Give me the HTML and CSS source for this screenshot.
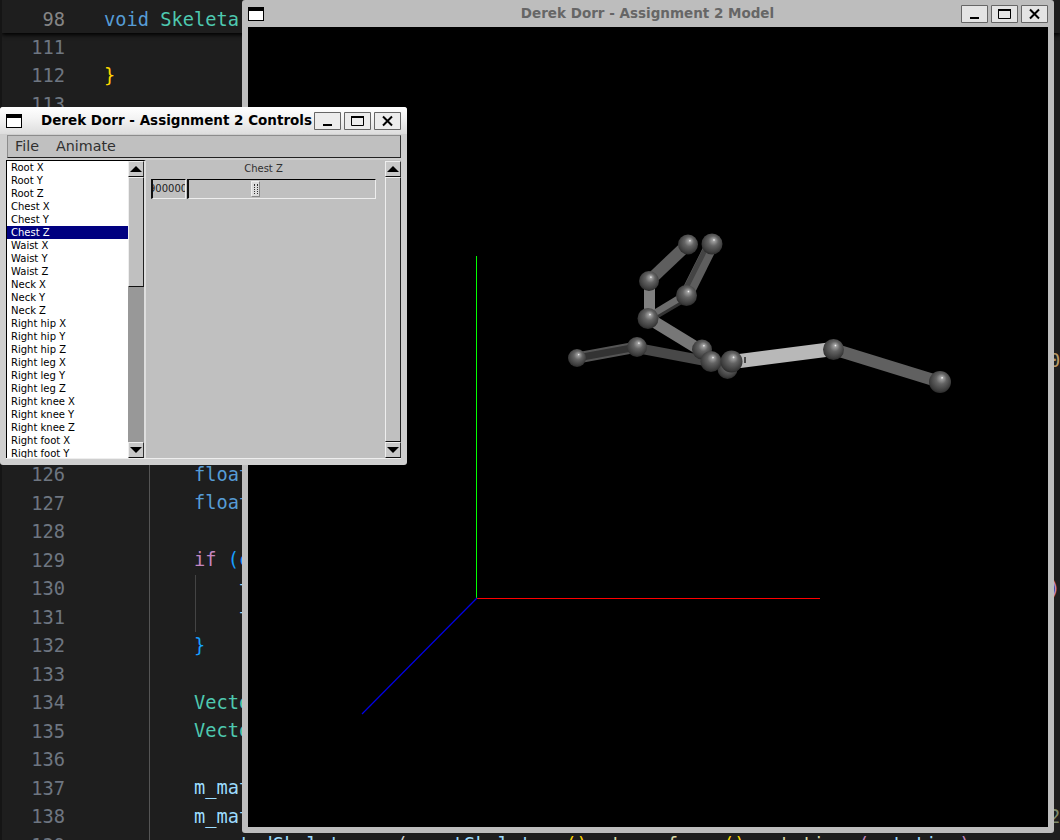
FILE: index.html
```html
<!DOCTYPE html>
<html>
  <head>
    <meta charset="UTF-8">
    <title>Derek Dorr - Assignment 2</title>
    <link rel="stylesheet" href="styles.css">
  </head>
  <body>
    <svg class="defs" width="0" height="0">
      <symbol id="icon-min" viewBox="0 0 27 18"><rect x="9" y="12" width="9" height="2" fill="#000"/></symbol>
      <symbol id="icon-max" viewBox="0 0 27 18"><path d="M7.500 4.500h12v9h-12z" fill="none" stroke="#000"/><rect x="7" y="4" width="13" height="2" fill="#000"/></symbol>
      <symbol id="icon-close" viewBox="0 0 27 18"><path d="M9 4.500l9 9M18 4.500l-9 9" fill="none" stroke="#000" stroke-width="2"/></symbol>
    </svg>

    <div class="editor">
      <div class="sticky">
        <span class="ln ln-sticky">98</span><span class="code"><span class="kw">void</span> <span class="type">Skeleta</span></span>
      </div>
      <div class="line"><span class="ln">111</span><span class="code"></span></div>
      <div class="line"><span class="ln">112</span><span class="code"><span class="gold">}</span></span></div>
      <div class="line"><span class="ln">113</span><span class="code"></span></div>
      <div class="line"><span class="ln">114</span><span class="code"></span></div>
      <div class="line"><span class="ln">115</span><span class="code"></span></div>
      <div class="line"><span class="ln">116</span><span class="code"></span></div>
      <div class="line"><span class="ln">117</span><span class="code"></span></div>
      <div class="line"><span class="ln">118</span><span class="code"></span></div>
      <div class="line"><span class="ln">119</span><span class="code"></span></div>
      <div class="line"><span class="ln">120</span><span class="code"></span></div>
      <div class="line"><span class="ln">121</span><span class="code"></span></div>
      <div class="line"><span class="ln">122</span><span class="code">                                                                                    <span class="tan">0</span></span></div>
      <div class="line"><span class="ln">123</span><span class="code"></span></div>
      <div class="line"><span class="ln">124</span><span class="code"></span></div>
      <div class="line"><span class="ln">125</span><span class="code"></span></div>
      <div class="line"><span class="ln">126</span><span class="code">        <span class="kw">float</span></span></div>
      <div class="line"><span class="ln">127</span><span class="code">        <span class="kw">float</span></span></div>
      <div class="line"><span class="ln">128</span><span class="code"></span></div>
      <div class="line"><span class="ln">129</span><span class="code">        <span class="ctl">if</span> <span class="brace">(c</span></span></div>
      <div class="line"><span class="ln">130</span><span class="code guide">            <span class="var">t</span>                                                                       <span class="ctl">)</span></span></div>
      <div class="line"><span class="ln">131</span><span class="code guide">            <span class="var">t</span></span></div>
      <div class="line"><span class="ln">132</span><span class="code">        <span class="brace">}</span></span></div>
      <div class="line"><span class="ln">133</span><span class="code"></span></div>
      <div class="line"><span class="ln">134</span><span class="code">        <span class="type">Vector</span></span></div>
      <div class="line"><span class="ln">135</span><span class="code">        <span class="type">Vector</span></span></div>
      <div class="line"><span class="ln">136</span><span class="code"></span></div>
      <div class="line"><span class="ln">137</span><span class="code">        <span class="var">m_mat</span></span></div>
      <div class="line"><span class="ln">138</span><span class="code">        <span class="var">m_mat</span>                                                                       <span class="num">2</span></span></div>
      <div class="line"><span class="ln">139</span><span class="code">            <span class="var">tedSkeleton</span> <span class="plain">= (</span><span class="var">constSkeleton</span> <span class="gold">()</span><span class="plain">-&gt;</span><span class="fn">transform</span> <span class="gold">()</span><span class="plain">.</span><span class="fn">rotation</span> <span class="ctl">(</span><span class="var">rotation</span><span class="ctl">)</span></span></div>
    </div>

    <div class="window window-model">
      <div class="titlebar">
        <span class="win-icon"></span>
        <span class="win-title">Derek Dorr - Assignment 2 Model</span>
        <span class="win-btn"><svg width="27" height="18"><use href="#icon-min"/></svg></span>
        <span class="win-btn"><svg width="27" height="18"><use href="#icon-max"/></svg></span>
        <span class="win-btn"><svg width="27" height="18"><use href="#icon-close"/></svg></span>
      </div>
      <svg class="scene" width="800" height="800" viewBox="248 27 800 800">
        <defs>
          <radialGradient id="ball" cx="0.5" cy="0.45" r="0.62" fx="0.6" fy="0.3">
            <stop offset="0" stop-color="#ffffff"/>
            <stop offset="0.1" stop-color="#a0a0a0"/>
            <stop offset="0.38" stop-color="#646464"/>
            <stop offset="0.78" stop-color="#3c3c3c"/>
            <stop offset="1" stop-color="#1e1e1e"/>
          </radialGradient>
        </defs>
        <g class="axes">
          <line x1="476.500" y1="598" x2="476.500" y2="256" stroke="#00ff00"/>
          <line x1="477" y1="598.500" x2="820" y2="598.500" stroke="#ff0000"/>
          <path d="M477 598L362 714" fill="none" stroke="#0000e6" stroke-width="1.200"/>
        </g>
        <g class="limbs">
          <line x1="688" y1="244" x2="649" y2="281" stroke="#5e5e5e" stroke-width="12"/>
          <line x1="712" y1="244" x2="686" y2="296" stroke="#5e5e5e" stroke-width="13"/>
          <line x1="708" y1="244" x2="682" y2="296" stroke="#444" stroke-width="5"/>
          <line x1="649.500" y1="281" x2="649.500" y2="318" stroke="#808080" stroke-width="11"/>
          <line x1="686" y1="295" x2="648" y2="318" stroke="#6c6c6c" stroke-width="8"/>
          <line x1="686" y1="300" x2="652" y2="320" stroke="#333" stroke-width="3"/>
          <line x1="648" y1="318" x2="702" y2="351" stroke="#777" stroke-width="12"/>
          <line x1="637" y1="347" x2="577" y2="358" stroke="#555" stroke-width="11"/>
          <line x1="637" y1="347" x2="577" y2="358" stroke="#333" stroke-width="7"/>
          <line x1="637" y1="348" x2="711" y2="362" stroke="#484848" stroke-width="10"/>
          <line x1="732" y1="362" x2="833" y2="349" stroke="#b8b8b8" stroke-width="14"/>
          <line x1="745" y1="357" x2="745" y2="363" stroke="#222" stroke-width="1.500"/>
          <line x1="833" y1="349" x2="940" y2="382" stroke="#606060" stroke-width="12"/>
        </g>
        <g class="joints" fill="url(#ball)">
          <circle cx="688" cy="244.500" r="10"/>
          <circle cx="712" cy="244" r="10.500"/>
          <circle cx="649" cy="281" r="10"/>
          <circle cx="686.500" cy="295.500" r="10.500"/>
          <circle cx="648" cy="318.500" r="10.500"/>
          <circle cx="702" cy="349.500" r="10"/>
          <circle cx="637" cy="347" r="10"/>
          <circle cx="577" cy="358" r="9"/>
          <circle cx="727.500" cy="369" r="10"/>
          <circle cx="711" cy="361.500" r="10.500"/>
          <circle cx="731.500" cy="361.500" r="11"/>
          <circle cx="833.500" cy="349.500" r="10.500"/>
          <circle cx="940" cy="382" r="11"/>
        </g>
      </svg>
    </div>

    <div class="window window-controls">
      <div class="titlebar">
        <span class="win-icon"></span>
        <span class="win-title">Derek Dorr - Assignment 2 Controls</span>
        <span class="win-btn"><svg width="27" height="18"><use href="#icon-min"/></svg></span>
        <span class="win-btn"><svg width="27" height="18"><use href="#icon-max"/></svg></span>
        <span class="win-btn"><svg width="27" height="18"><use href="#icon-close"/></svg></span>
      </div>
      <div class="menubar">
        <span class="menu-item">File</span>
        <span class="menu-item">Animate</span>
      </div>
      <div class="panes">
        <div class="list-pane">
          <ul class="joint-list">
            <li>Root X</li>
            <li>Root Y</li>
            <li>Root Z</li>
            <li>Chest X</li>
            <li>Chest Y</li>
            <li class="selected">Chest Z</li>
            <li>Waist X</li>
            <li>Waist Y</li>
            <li>Waist Z</li>
            <li>Neck X</li>
            <li>Neck Y</li>
            <li>Neck Z</li>
            <li>Right hip X</li>
            <li>Right hip Y</li>
            <li>Right hip Z</li>
            <li>Right leg X</li>
            <li>Right leg Y</li>
            <li>Right leg Z</li>
            <li>Right knee X</li>
            <li>Right knee Y</li>
            <li>Right knee Z</li>
            <li>Right foot X</li>
            <li>Right foot Y</li>
          </ul>
          <div class="scrollbar">
            <span class="sb-btn"><span class="arrow-up"></span></span>
            <div class="sb-track">
              <span class="sb-thumb sb-thumb-list"></span>
            </div>
            <span class="sb-btn"><span class="arrow-down"></span></span>
          </div>
        </div>
        <div class="slider-pane">
          <div class="slider-area">
            <div class="slider-label">Chest Z</div>
            <div class="slider-row">
              <div class="value-box"><span class="value-text">9000000000</span></div>
              <div class="slider"><span class="slider-thumb"><span class="slider-grip"></span></span></div>
            </div>
          </div>
          <div class="scrollbar scrollbar-full">
            <span class="sb-btn"><span class="arrow-up"></span></span>
            <div class="sb-track">
              <span class="sb-thumb"></span>
            </div>
            <span class="sb-btn"><span class="arrow-down"></span></span>
          </div>
        </div>
      </div>
    </div>
  </body>
</html>
```

FILE: styles.css
```css
* {
  box-sizing: border-box;
}
html, body {
  height: 100%;
}
body {
  margin: 0;
  overflow: hidden;
  background-color: #1e1e1e;
  font-family: "DejaVu Sans", sans-serif;
}
.defs {
  display: block;
}

/* editor behind the windows */
.editor {
  height: 840px;
  overflow: hidden;
  border-left: 2px solid #151515;
  font-family: "DejaVu Sans Mono", monospace;
  font-size: 18.7px;
  background-color: #1e1e1e;
}
.sticky {
  display: flex;
  align-items: center;
  height: 33px;
  padding-top: 6px;
  box-shadow: 0 2px 4px #000;
}
.line {
  display: flex;
  align-items: center;
  height: 28.5px;
}
.ln {
  width: 63px;
  flex: none;
  text-align: right;
  color: #6e7681;
}
.ln-sticky {
  color: #858585;
}
.code {
  margin-left: 39px;
  flex: 1;
  white-space: pre;
  color: #d4d4d4;
}
.line .code {
  height: 100%;
  margin-left: 0;
  padding-left: 39px;
  line-height: 28.5px;
  background: linear-gradient(#555, #555) 84px 0 / 1px 100% no-repeat;
}
.line .guide {
  background:
    linear-gradient(#555, #555) 84px 0 / 1px 100% no-repeat,
    linear-gradient(#444, #444) 130px 0 / 1px 100% no-repeat;
}
.line:nth-child(-n+4) .code {
  background: none;
}
.kw { color: #569cd6; }
.type { color: #4ec9b0; }
.ctl { color: #c586c0; }
.var { color: #9cdcfe; }
.fn { color: #dcdcaa; }
.num { color: #7d8a6c; }
.tan { color: #b89a68; }
.gold { color: #ffd700; }
.brace { color: #179fff; }
.plain { color: #d4d4d4; }

/* desktop windows */
.window {
  position: absolute;
  display: flex;
  flex-direction: column;
  border-radius: 3px;
}
.window-model {
  left: 242px;
  top: 0;
  width: 812px;
  height: 833px;
  padding: 0 6px;
  background-color: #bdbdbd;
}
.window-controls {
  left: 0;
  top: 107px;
  width: 407px;
  height: 358px;
  background-color: #cfcfcf;
}
.titlebar {
  display: flex;
  align-items: center;
  gap: 3px;
  flex: none;
  height: 27px;
}
.window-controls .titlebar {
  padding: 0 6px;
  border-radius: 3px 3px 0 0;
  background: linear-gradient(#ffffff, #f4f4f4 40%, #dddddd);
}
.win-icon {
  width: 16px;
  height: 14px;
  flex: none;
  background-color: #fff;
  border: 1px solid #000;
  border-top-width: 4px;
}
.win-title {
  flex: 1;
  min-width: 0;
  padding-bottom: 2px;
  font-size: 13.5px;
  font-weight: bold;
  white-space: nowrap;
}
.window-model .win-title {
  padding-left: 70px;
  text-align: center;
  color: #666;
}
.window-controls .win-title {
  padding-left: 16px;
  color: #000;
}
.win-btn {
  display: block;
  width: 27px;
  height: 18px;
  flex: none;
  background-color: #e4e4e4;
  box-shadow: inset 0 0 0 1px #666;
  border-radius: 1px;
}
.window-controls .win-btn {
  background-color: #ececec;
}
.win-btn svg {
  display: block;
}
.scene {
  display: block;
  flex: none;
  background-color: #000;
}
.axes line {
  shape-rendering: crispEdges;
}

/* controls window contents */
.menubar {
  display: flex;
  align-items: center;
  gap: 17px;
  flex: none;
  height: 23px;
  margin: 1px 6px 0 7px;
  padding: 0 0 2px 7px;
  background-color: #c0c0c0;
  border-top: 1px solid #8c8c8c;
  border-left: 1px solid #8c8c8c;
  border-right: 1px solid #333;
  border-bottom: 1px solid #222;
  font-size: 14.3px;
  color: #303030;
}
.panes {
  display: flex;
  height: 299px;
  margin: 2px 6px 0 6px;
  border-bottom: 1px solid #eee;
}
.list-pane {
  display: flex;
  width: 140px;
  flex: none;
  border-top: 1px solid #000;
  border-left: 1px solid #000;
  border-right: 2px solid #dedede;
  background-color: #fff;
}
.joint-list {
  width: 121px;
  flex: none;
  margin: 0;
  padding: 0;
  list-style: none;
  overflow: hidden;
  font-size: 10px;
  color: #000;
}
.joint-list li {
  height: 13px;
  line-height: 13px;
  padding-left: 4px;
  white-space: nowrap;
}
.joint-list .selected {
  background-color: #000080;
  color: #fff;
}
.scrollbar {
  display: flex;
  flex-direction: column;
  width: 16px;
  flex: none;
  background-color: #c0c0c0;
}
.sb-btn {
  display: flex;
  align-items: center;
  justify-content: center;
  height: 16px;
  flex: none;
  background-color: #c8c8c8;
  border-top: 1px solid #eee;
  border-left: 1px solid #eee;
  border-right: 1px solid #333;
  border-bottom: 1px solid #111;
}
.sb-track {
  display: flex;
  flex-direction: column;
  flex: 1;
  background-color: #989898;
}
.sb-thumb {
  display: block;
  flex: 1;
  background-color: #c0c0c0;
  border-top: 1px solid #eee;
  border-left: 1px solid #eee;
  border-right: 1px solid #222;
  border-bottom: 1px solid #111;
}
.sb-thumb-list {
  flex: none;
  height: 110px;
}
.arrow-up, .arrow-down {
  width: 0;
  height: 0;
  border-left: 6px solid transparent;
  border-right: 6px solid transparent;
}
.arrow-up {
  border-bottom: 6px solid #000;
}
.arrow-down {
  border-top: 6px solid #000;
}
.slider-pane {
  display: flex;
  flex: 1;
  background-color: #c0c0c0;
  padding-top: 1px;
}
.slider-area {
  flex: 1;
  padding: 0 9px 0 5px;
}
.slider-label {
  height: 18px;
  line-height: 16px;
  text-align: center;
  font-size: 10px;
  color: #303030;
}
.slider-row {
  display: flex;
  height: 20px;
  gap: 1px;
}
.value-box {
  width: 35px;
  flex: none;
  overflow: hidden;
  border-top: 1px solid #000;
  border-left: 2px solid #111;
  border-bottom: 1px solid #eee;
  border-right: 1px solid #eee;
  font-size: 10px;
  line-height: 17px;
  white-space: nowrap;
  color: #202020;
}
.value-text {
  display: block;
  margin-left: -4px;
}
.slider {
  flex: 1;
  display: flex;
  padding: 1px 0 0 62px;
  border-top: 1px solid #000;
  border-left: 2px solid #111;
  border-bottom: 1px solid #eee;
  border-right: 1px solid #eee;
}
.slider-thumb {
  display: flex;
  justify-content: center;
  width: 9px;
  height: 16px;
  padding: 2px 0;
  background-color: #dcdcdc;
  border: 1px solid #888;
  border-top-color: #eee;
  border-left-color: #eee;
}
.slider-grip {
  width: 4px;
  border-left: 1px dotted #333;
  border-right: 1px dotted #333;
}
```
